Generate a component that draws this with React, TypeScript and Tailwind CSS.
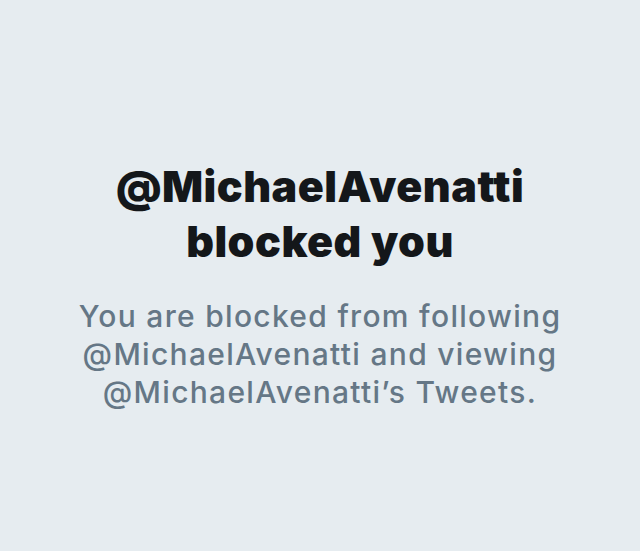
export default function App() {
  return (
    <div className="w-[640px] h-[551px] bg-[#e6ecf0] flex flex-col items-center pt-[159px] text-center" style={{ fontFamily: "Inter, 'Noto Sans', sans-serif" }}>
      <h1 className="text-[43px] leading-[55px] font-black text-[#14171a] tracking-[0.5px]">
        @MichaelAvenatti
        <br />
        blocked you
      </h1>
      <p className="mt-[28px] text-[30px] leading-[38px] font-medium text-[#657786] tracking-[1.3px]">
        You are blocked from following
        <br />
        @MichaelAvenatti and viewing
        <br />
        @MichaelAvenatti’s Tweets.
      </p>
    </div>
  );
}
